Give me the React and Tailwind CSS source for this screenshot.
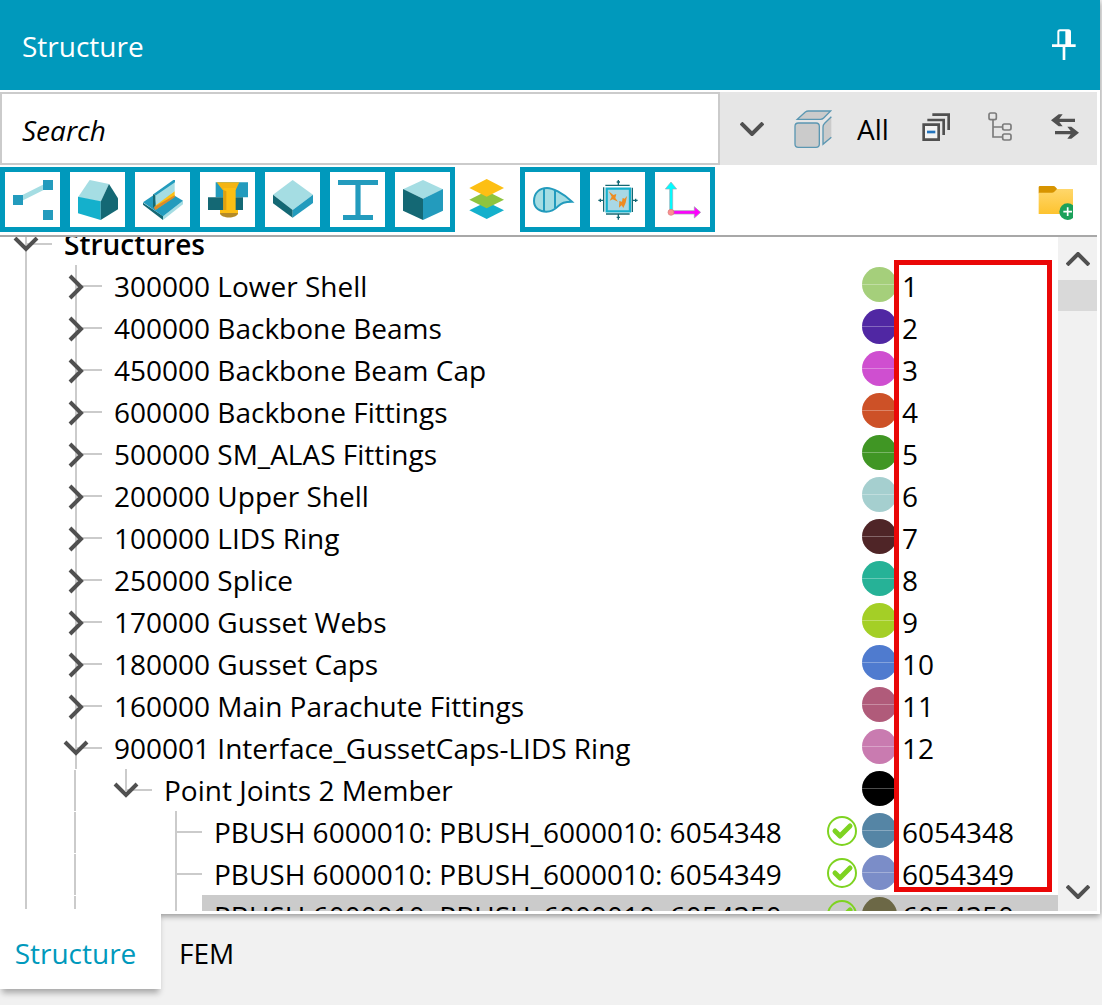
import React, { useState } from "react";

const members = [
  { id: "300000", name: "Lower Shell", dot: "bg-[#a5cf7b]" },
  { id: "400000", name: "Backbone Beams", dot: "bg-[#5027a3]" },
  { id: "450000", name: "Backbone Beam Cap", dot: "bg-[#cf4fd0]" },
  { id: "600000", name: "Backbone Fittings", dot: "bg-[#cd5127]" },
  { id: "500000", name: "SM_ALAS Fittings", dot: "bg-[#409624]" },
  { id: "200000", name: "Upper Shell", dot: "bg-[#a5cfcf]" },
  { id: "100000", name: "LIDS Ring", dot: "bg-[#4f2527]" },
  { id: "250000", name: "Splice", dot: "bg-[#26b297]" },
  { id: "170000", name: "Gusset Webs", dot: "bg-[#a4cf26]" },
  { id: "180000", name: "Gusset Caps", dot: "bg-[#4f7bcf]" },
  { id: "160000", name: "Main Parachute Fittings", dot: "bg-[#b05b7a]" },
];

// guides: one entry per indent level, left to right
const rows = [
  { label: "Structures", bold: true, guides: ["root"] },
  ...members.map((m, i) => ({
    label: `${m.id} ${m.name}`,
    value: String(i + 1),
    dot: m.dot,
    guides: ["line", "closed"],
  })),
  {
    label: "900001 Interface_GussetCaps-LIDS Ring",
    value: "12",
    dot: "bg-[#c97bb0]",
    guides: ["line", "open"],
  },
  {
    label: "Point Joints 2 Member",
    value: "",
    dot: "bg-black",
    guides: ["line", "dash", "last"],
  },
  {
    label: "PBUSH 6000010: PBUSH_6000010: 6054348",
    value: "6054348",
    dot: "bg-[#5585a5]",
    check: true,
    guides: ["line", "dash", "blank", "leaf"],
  },
  {
    label: "PBUSH 6000010: PBUSH_6000010: 6054349",
    value: "6054349",
    dot: "bg-[#7b8dc8]",
    check: true,
    guides: ["line", "dash", "blank", "leaf"],
  },
  {
    label: "PBUSH 6000010: PBUSH_6000010: 6054350",
    value: "6054350",
    dot: "bg-[#6c6846]",
    check: true,
    selected: true,
    guides: ["line", "dash", "blank", "leaf"],
  },
];

const filters = [
  {
    name: "Points",
    framed: true,
    art: (
      <>
        <path d="M39 84 129 39" stroke="#a5dde3" strokeWidth="15" />
        <path d="M24 69h30v30H24zM114 24h30v30h-30zM114 114h30v30h-30z" fill="#239bbd" />
      </>
    ),
  },
  {
    name: "Volumes",
    framed: true,
    art: (
      <>
        <path d="M24 76 59 24 117 36 92 89z" fill="#a5dde3" />
        <path d="M24 74 92 88V144L24 124z" fill="#14b0cc" />
        <path d="M92 89 117 36 144 79V112L92 144z" fill="#146874" />
      </>
    ),
  },
  {
    name: "Joints",
    framed: true,
    art: (
      <>
        <path d="M24 92 84 132V144L24 98z" fill="#146874" />
        <path d="M84 132 144 86V97L84 144z" fill="#a5dde3" />
        <path d="M24 91 84 50 144 86 84 133z" fill="#239bbd" />
        <path d="M61 98 119 57V74L61 114z" fill="#fdbf13" />
        <path d="M56 106 119 70V76L61 114z" fill="#d98b2b" />
        <path d="M57 67 119 24V58L63 100z" fill="#a5dde3" />
        <path d="M55 67 115 24H120V31L63 70z" fill="#239bbd" />
        <path d="M54 66 61 70V100L54 108z" fill="#146874" />
      </>
    ),
  },
  {
    name: "Fasteners",
    framed: true,
    art: (
      <>
        <path d="M47 31H144V76H47z" fill="#239bbd" />
        <path d="M24 76H129V114H24z" fill="#146874" />
        <path d="M50 31H118L107 54H68z" fill="#f3b414" />
        <path d="M70 48H107V118H70z" fill="#fdbf13" />
        <path d="M70 54 79 58V116H70z" fill="#e0a010" />
        <path d="M60 114H114V126C108 136 68 136 60 126z" fill="#fdbf13" />
        <path d="M60 123H114C112 141 62 141 60 123z" fill="#b58b27" />
      </>
    ),
  },
  {
    name: "Panels",
    framed: true,
    art: (
      <>
        <path d="M83 24 144 68 83 114 24 68z" fill="#a5dde3" />
        <path d="M24 68 83 114V137L24 94z" fill="#146874" />
        <path d="M144 68 83 114V137L144 93z" fill="#239bbd" />
      </>
    ),
  },
  {
    name: "Beams",
    framed: true,
    art: (
      <>
        <path d="M75 39h18v90H75z" fill="#7cc3d8" />
        <path d="M24 24h120v15H24zM78 39h12v90H78zM39 129h90v15H39z" fill="#239bbd" />
      </>
    ),
  },
  {
    name: "Solids",
    framed: true,
    art: (
      <>
        <path d="M84 24 144 52 84 80 24 52z" fill="#a5dde3" />
        <path d="M24 51 84 80V144L24 116z" fill="#146874" />
        <path d="M144 51 84 80V144L144 116z" fill="#239bbd" />
      </>
    ),
  },
  {
    name: "Layers",
    art: (
      <>
        <path d="M80 89 132 115 80 141 28 115z" fill="#14b0cc" />
        <path d="M80 57 132 83 80 109 28 83z" fill="#8ec43f" />
        <path d="M80 21 132 48 80 74 28 48z" fill="#fdbf13" />
      </>
    ),
  },
  {
    name: "Airfoils",
    framed: true,
    art: (
      <>
        <path
          d="M27 87C27 62 44 48 66 48C82 48 112 62 141 89C118 89 110 93 99 103C88 114 79 119 64 119C44 119 27 108 27 87Z"
          fill="#a5dde3"
          stroke="#239bbd"
          strokeWidth="6"
        />
        <path d="M57 50V118M90 57V108" stroke="#239bbd" strokeWidth="6" />
      </>
    ),
  },
  {
    name: "Loads",
    framed: true,
    art: (
      <>
        <path d="M50 50H120V118H50z" fill="#a9d8e5" stroke="#14b0cc" strokeWidth="7" />
        <path
          d="M46 40H119M48 126H119M41 46V119M127 47V120M85 24V39M80 30H90M85 127V143M80 136H90M25 85H40M31 80V90M128 85H143M137 80V90"
          stroke="#146874"
          strokeWidth="4"
        />
        <path d="M56 58 70 69 79 66 76 78 84 89 68 82 59 86 65 74z" fill="#ee8c22" />
        <path d="M111 72 107 92 100 108 95 100 87 107 88 87 96 89 98 78 104 80z" fill="#ee8c22" />
      </>
    ),
  },
  {
    name: "Axes",
    framed: true,
    art: (
      <>
        <path d="M48 30 65 51H53V117H44V51H31z" fill="#00fdff" stroke="#9aa9b8" strokeWidth="2" />
        <path d="M137 121 118 104V116H54V126H118V138z" fill="#f0f" stroke="#9b9ba8" strokeWidth="2" />
        <circle cx="48" cy="121" r="9" fill="#fd8f8f" stroke="#d57b7b" strokeWidth="2" />
      </>
    ),
  },
];

const Chevron = ({ up }) => (
  <svg width="24" height="14" viewBox="0 0 24 14" fill="none" stroke="#505050" strokeWidth="4">
    <path d={up ? "M1 13 12 2 23 13" : "M1 1 12 12 23 1"} />
  </svg>
);

const Guide = ({ kind }) => {
  const toggles = kind === "root" || kind === "closed" || kind === "open" || kind === "last";
  const art = (
    <svg width="50" height="42" viewBox="0 0 50 42" fill="none">
      <g stroke="#cbcbcb" strokeWidth="2">
        {["root", "line", "closed", "open", "leaf"].includes(kind) && <path d="M24 0V42" />}
        {kind === "dash" && <path d="M23 1V42" />}
        {kind === "last" && <path d="M24 0V22" />}
        {(toggles || kind === "leaf") && <path d="M24 21H50" />}
      </g>
      {kind === "closed" && <path d="M18 11 29 22 18 33" stroke="#505050" strokeWidth="4" />}
      {toggles && kind !== "closed" && (
        <path d="M13 15 24 26 35 15" stroke="#505050" strokeWidth="4" />
      )}
    </svg>
  );

  if (!toggles) return <span className="w-[50px] shrink-0">{art}</span>;
  return (
    <button className="w-[50px] shrink-0" aria-label="Toggle branch">
      {art}
    </button>
  );
};

const CheckMark = () => (
  <svg width="30" height="30" viewBox="0 0 30 30" fill="none" stroke="#7ed321">
    <circle cx="15" cy="15" r="14" strokeWidth="2" />
    <path d="M8 15 13 20 23 10" strokeWidth="5" strokeLinecap="round" strokeLinejoin="round" />
  </svg>
);

const TreeRow = ({ row }) => (
  <li className="flex h-[42px] pl-0.5" role="treeitem" aria-selected={Boolean(row.selected)}>
    {row.guides.map((kind, index) => (
      <Guide key={index} kind={kind} />
    ))}
    <div className={`flex flex-1 min-w-0 pl-3 ${row.selected ? "bg-[#cbcbcb]" : ""}`}>
      <span className={`flex-1 whitespace-nowrap leading-[42px] ${row.bold ? "font-semibold" : ""}`}>
        {row.label}
      </span>
      {row.check && (
        <span className="mt-[5px] mr-[5px]">
          <CheckMark />
        </span>
      )}
      {row.dot && (
        <span className={`mt-0.5 flex h-[35px] w-[35px] items-center rounded-full ${row.dot}`}>
          <span className="h-px w-full bg-white/30" />
        </span>
      )}
      {row.dot && <span className="w-[161px] pl-[5px] leading-[42px]">{row.value}</span>}
    </div>
  </li>
);

const SearchBar = () => {
  const [term, setTerm] = useState("");

  return (
    <div className="mt-0.5 mr-[3px] flex h-[73px] bg-[#e6e6e6]">
      <input
        type="text"
        aria-label="Search"
        placeholder="Search"
        value={term}
        onChange={(e) => setTerm(e.target.value)}
        className="min-w-0 flex-1 border-2 border-[#cbcbcb] bg-white px-5 pt-0.5 italic outline-none placeholder:text-black"
      />
      <button className="flex w-16 items-center justify-center" aria-label="Search options">
        <Chevron />
      </button>
      <button className="flex w-[58px] items-center justify-center" aria-label="Display">
        <svg width="38" height="38" viewBox="0 0 114 114" fill="#cbcbcb" stroke="#5b97b2" strokeWidth="4">
          <rect x="3" y="39" width="73" height="73" rx="10" />
          <path d="M10 28 34 6Q38 3 43 3H110L89 24Q85 28 79 28Z" />
          <path d="M112 20 92 40Q87 45 87 52V103L112 82" />
        </svg>
      </button>
      <button className="w-[62px]">All</button>
      <button className="flex w-16 items-center justify-center pb-1" aria-label="Collapse all">
        <svg width="28" height="28" viewBox="0 0 84 84" fill="none" stroke="#505050" strokeWidth="8">
          <path d="M5 35H50V80H5z" fill="#f3f3f3" />
          <path d="M16 21H65V66M31 5H80V51" />
          <path d="M15 57H40" stroke="#2374bd" />
        </svg>
      </button>
      <button className="flex w-16 items-center justify-center pb-1" aria-label="Tree view">
        <svg width="24" height="29" viewBox="0 0 72 87" fill="none" stroke="#7b7b7b" strokeWidth="5">
          <rect x="3" y="3" width="22" height="20" rx="5" />
          <rect x="44" y="36" width="25" height="18" rx="5" />
          <rect x="44" y="66" width="25" height="18" rx="5" />
          <path d="M15 23V75H44M15 45H44" />
        </svg>
      </button>
      <button className="flex w-[65px] items-center justify-center pb-1" aria-label="Swap">
        <svg width="28" height="25" viewBox="0 0 84 75" fill="#505050">
          <path d="M0 19 23 1H35L25 14H72V24H25L35 37H23z" />
          <path d="M84 56 61 38H49L59 51H12V61H59L49 74H61z" />
        </svg>
      </button>
    </div>
  );
};

const FilterBar = () => (
  <div className="mt-0.5 mr-[3px] flex h-[70px] items-start border-b-2 border-[#a8a8a8]">
    {filters.map((filter) => (
      <button
        key={filter.name}
        aria-label={filter.name}
        className={`h-[65px] w-[65px] shrink-0 border-5 bg-white ${
          filter.framed ? "border-[#0099bc]" : "border-transparent"
        }`}
      >
        <svg width="55" height="55" viewBox="0 0 165 165" fill="none">
          {filter.art}
        </svg>
      </button>
    ))}
    <button className="mt-[19px] mr-[22px] ml-auto" aria-label="New folder">
      <svg width="37" height="35" viewBox="0 0 111 105">
        <defs>
          <linearGradient id="folder" x1="0" y1="0" x2="0" y2="1">
            <stop offset="0" stopColor="#ffd76b" />
            <stop offset="1" stopColor="#fdc32f" />
          </linearGradient>
          <clipPath id="folder-edge">
            <path d="M0 0H105V105H0z" />
          </clipPath>
        </defs>
        <path d="M2 4Q2 0 6 0H46Q50 0 53 4L58 10 48 22H2z" fill="#d79400" />
        <path d="M2 20H42Q46 20 49 17L57 9H105V84H2z" fill="url(#folder)" />
        <g clipPath="url(#folder-edge)">
          <circle cx="89" cy="77" r="25" fill="#1ba15a" />
          <path d="M89 64V90M76 77H102" stroke="#fff" strokeWidth="5" />
        </g>
      </svg>
    </button>
  </div>
);

const StructureTree = () => (
  <div className="mr-[3px] mb-[3px] flex min-h-0 flex-1">
    <div className="relative min-w-0 flex-1 overflow-hidden">
      <ul className="-mt-3.5" role="tree" aria-label="Structures">
        {rows.map((row) => (
          <TreeRow key={row.label} row={row} />
        ))}
      </ul>
      {/* callout around the ID column */}
      <div className="absolute top-[23px] right-1.5 h-[632px] w-[158px] border-5 border-[#ea0707]" />
    </div>
    <div className="flex w-[39px] flex-col items-center bg-[#f1f1f1]">
      <button className="flex h-[43px] w-full items-center justify-center" aria-label="Scroll up">
        <Chevron up />
      </button>
      <div className="h-[31px] w-full bg-[#d9d9d9]" />
      <button className="mt-auto flex h-[39px] w-full items-center justify-center" aria-label="Scroll down">
        <Chevron />
      </button>
    </div>
  </div>
);

const App = () => {
  const [tab, setTab] = useState("Structure");

  return (
    <div className="flex h-screen flex-col overflow-hidden bg-[#f1f1f1] font-['Open_Sans','Noto_Sans',sans-serif] text-[28px] text-black">
      <section className="mr-0.5 flex min-h-0 flex-1 flex-col bg-white shadow-[0_2px_6px_rgba(0,0,0,0.4)]">
        <header className="flex h-[90px] shrink-0 items-center justify-between bg-[#0099bc] pr-6 pl-[22px] text-white">
          <h1 className="pt-0.5">Structure</h1>
          <button className="pb-0.5" aria-label="Pin panel">
            <svg width="24" height="31" viewBox="0 0 72 93" fill="none" stroke="#fff">
              <path d="M19 48V9Q19 4 24 4H49Q54 4 54 9V48" strokeWidth="6" />
              <path d="M46 4V48" strokeWidth="12" />
              <path d="M0 50H71M36 50V93" strokeWidth="8" />
            </svg>
          </button>
        </header>
        <SearchBar />
        <FilterBar />
        <StructureTree />
      </section>

      <nav className="flex h-[91px] shrink-0 items-start">
        {["Structure", "FEM"].map((name) => (
          <button
            key={name}
            onClick={() => setTab(name)}
            className={
              name === tab
                ? "relative -mt-[5px] h-20 w-[161px] bg-white pt-2 pr-2.5 text-[#0099bc] shadow-[0_6px_6px_-2px_rgba(0,0,0,0.3)]"
                : "h-[78px] px-[18px]"
            }
          >
            {name}
          </button>
        ))}
      </nav>
    </div>
  );
};

export default App;
